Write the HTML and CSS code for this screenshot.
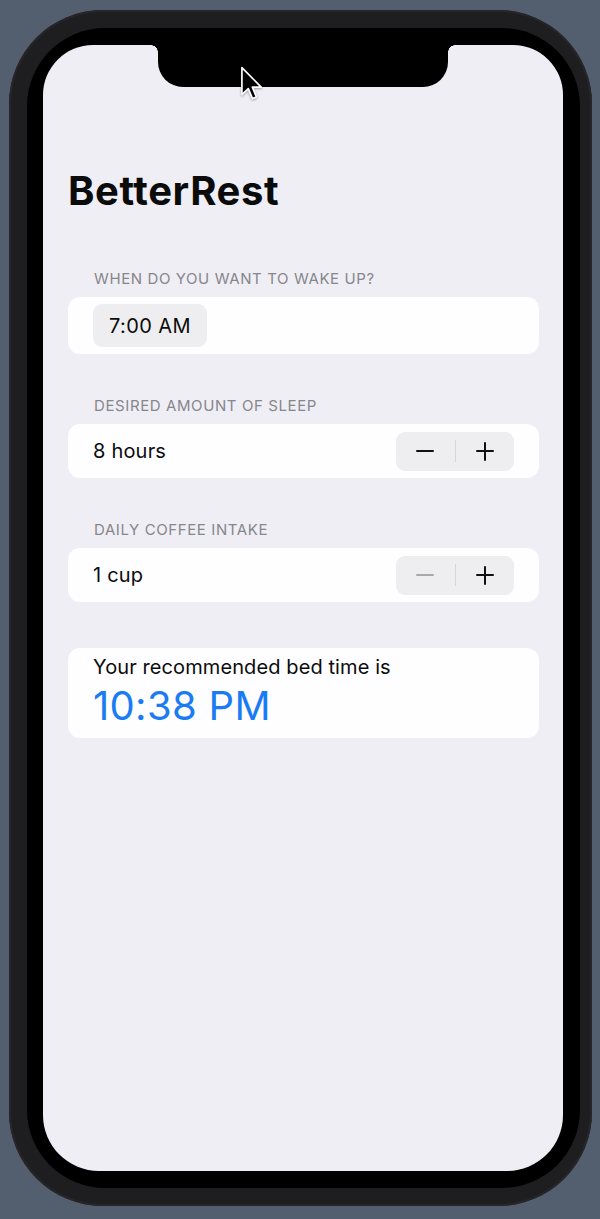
FILE: index.html
```html
<!DOCTYPE html>
<html lang="en">
<head>
<meta charset="utf-8">
<title>BetterRest</title>
<link rel="stylesheet" href="styles.css">
</head>
<body>
<div class="phone">
  <div class="bezel">
    <div class="screen">
      <div class="notch"></div>
      <div class="content">
        <h1 class="title">BetterRest</h1>

        <section class="section">
          <div class="section-header">WHEN DO YOU WANT TO WAKE UP?</div>
          <div class="card card-tall">
            <span class="pill">7:00 AM</span>
          </div>
        </section>

        <section class="section">
          <div class="section-header">DESIRED AMOUNT OF SLEEP</div>
          <div class="card">
            <span class="value">8 hours</span>
            <div class="stepper">
              <span class="step"><span class="minus"></span></span>
              <span class="divider"></span>
              <span class="step"><span class="plus"></span></span>
            </div>
          </div>
        </section>

        <section class="section">
          <div class="section-header">DAILY COFFEE INTAKE</div>
          <div class="card">
            <span class="value">1 cup</span>
            <div class="stepper">
              <span class="step"><span class="minus disabled"></span></span>
              <span class="divider"></span>
              <span class="step"><span class="plus"></span></span>
            </div>
          </div>
        </section>

        <div class="card result">
          <div class="result-label">Your recommended bed time is</div>
          <div class="result-time">10:38 PM</div>
        </div>
      </div>

      <svg class="cursor" width="24" height="37" viewBox="0 0 14 22" aria-hidden="true">
        <path d="M1 1 L1 17 L4.8 13.4 L7.3 19.4 L9.6 18.4 L7.2 12.6 L12.5 12.6 Z" fill="#000" stroke="#fff" stroke-width="1" stroke-linejoin="round"/>
      </svg>
    </div>
  </div>
</div>
</body>
</html>
```

FILE: styles.css
```css
html, body {
  margin: 0;
  padding: 0;
}

body {
  background: #535f6e;
  width: 600px;
  height: 1219px;
  overflow: hidden;
  padding: 10px 0 0 9px;
  box-sizing: border-box;
  font-family: Inter, "Noto Sans", "Liberation Sans", sans-serif;
}

.phone {
  width: 583px;
  height: 1196px;
  box-sizing: border-box;
  padding: 18px 12px 18px 18px;
  background: #1e1e21;
  border-radius: 94px;
  box-shadow: inset 0 0 0 2px #26262a;
}

.bezel {
  height: 100%;
  box-sizing: border-box;
  padding: 17px 17px 17px 16px;
  background: #000;
  border-radius: 78px;
}

.screen {
  position: relative;
  width: 520px;
  height: 1126px;
  background: #efeef5;
  border-radius: 50px 50px 56px 56px;
  overflow: hidden;
}

.notch {
  position: absolute;
  left: 115px;
  top: 0;
  width: 290px;
  height: 42px;
  background: #000;
  border-radius: 0 0 25px 25px;
}

.notch::before,
.notch::after {
  content: "";
  position: absolute;
  top: 0;
  width: 7px;
  height: 7px;
}

.notch::before {
  left: -7px;
  background: radial-gradient(circle at 0 100%, transparent 6.5px, #000 7px);
}

.notch::after {
  right: -7px;
  background: radial-gradient(circle at 100% 100%, transparent 6.5px, #000 7px);
}

.content {
  padding: 122px 24px 0 25px;
}

.title {
  margin: 0;
  font-size: 40px;
  line-height: 48px;
  font-weight: 700;
  color: #0b0b0c;
  letter-spacing: 0.6px;
}

.section {
  margin-top: 43px;
}

.section:first-of-type {
  margin-top: 55px;
}

.section-header {
  padding-left: 26px;
  font-size: 15px;
  line-height: 18px;
  color: #86868b;
  margin-bottom: 9px;
  letter-spacing: 0.6px;
}

.card {
  background: #fefdff;
  border-radius: 12px;
  height: 54px;
  box-sizing: border-box;
  padding: 0 25px;
  display: flex;
  align-items: center;
  justify-content: space-between;
}

.card-tall {
  height: 57px;
  justify-content: flex-start;
}

.pill {
  display: flex;
  align-items: center;
  height: 43px;
  padding: 0 16px;
  background: #eeeef0;
  border-radius: 9px;
  font-size: 20px;
  color: #0b0b0c;
  letter-spacing: 0.4px;
}

.value {
  font-size: 20px;
  color: #0b0b0c;
  letter-spacing: 0.2px;
}

.stepper {
  display: flex;
  align-items: center;
  width: 118px;
  height: 39px;
  background: #eeeef0;
  border-radius: 9px;
}

.step {
  flex: 1;
  height: 100%;
  display: flex;
  align-items: center;
  justify-content: center;
}

.divider {
  width: 1px;
  height: 22px;
  background: #d6d6d9;
}

.minus,
.plus {
  position: relative;
  width: 18px;
  height: 19px;
}

.minus::before,
.plus::before,
.plus::after {
  content: "";
  position: absolute;
  background: #111;
  border-radius: 1px;
}

.minus::before,
.plus::before {
  left: 0;
  right: 0;
  top: 8.5px;
  height: 2px;
}

.plus::after {
  top: 0;
  bottom: 0;
  left: 8px;
  width: 2px;
}

.minus.disabled::before {
  background: #a9a9ad;
}

.result {
  margin-top: 46px;
  height: auto;
  display: block;
  padding: 7px 25px 10px;
}

.result-label {
  font-size: 20px;
  line-height: 24px;
  color: #0b0b0c;
  letter-spacing: 0.1px;
}

.result-time {
  margin-top: 5px;
  font-size: 40px;
  line-height: 44px;
  color: #1a7cf2;
  letter-spacing: 0.3px;
}

.cursor {
  position: absolute;
  left: 197px;
  top: 21px;
  filter: drop-shadow(0 1px 1px rgba(0, 0, 0, 0.35));
}
```
